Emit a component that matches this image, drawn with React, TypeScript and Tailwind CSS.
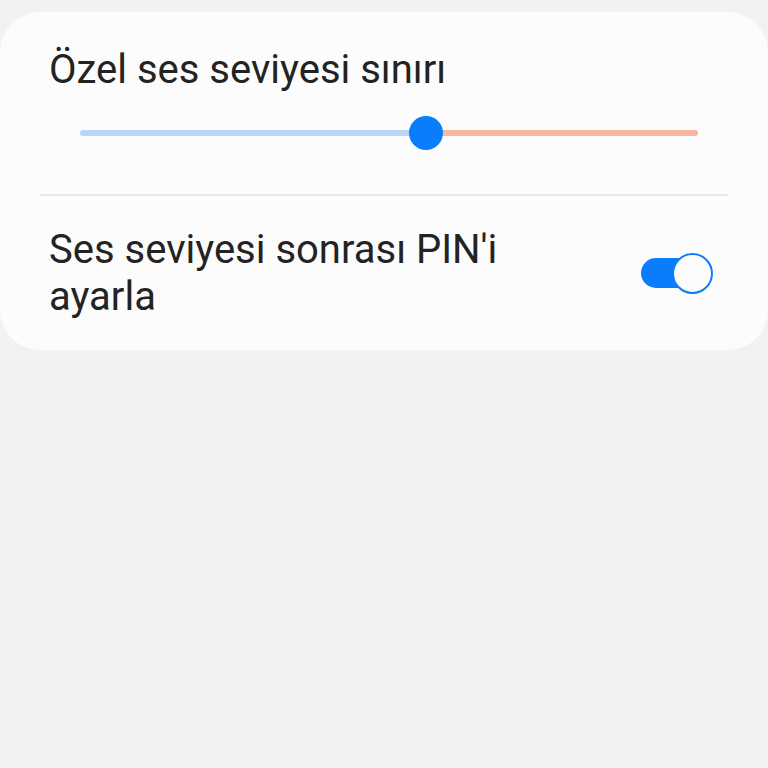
import React, { useState } from 'react';

const App = () => {
  const [value] = useState(56);
  const [pinOn, setPinOn] = useState(true);

  return (
    <div className="w-[768px] h-[768px] bg-[#f2f2f2] pt-[12px] font-['Roboto',sans-serif] text-[#232323]">
      <div className="bg-[#fcfcfc] rounded-[40px]">
        {/* slider section */}
        <div className="h-[182px] flex flex-col">
          <div className="pl-[49px] pt-[35px] text-[40px] leading-[46px]">Özel ses seviyesi sınırı</div>
          <div className="mt-[23px] ml-[80px] mr-[70px] relative h-[34px] flex items-center">
            <div className="flex w-full h-[6px] rounded-full overflow-hidden">
              <div className="h-full bg-[#b6d7f8]" style={{ width: `${value}%` }} />
              <div className="h-full flex-1 bg-[#f8b6a2]" />
            </div>
            <div
              className="absolute w-[34px] h-[34px] rounded-full bg-[#0a7dfc] top-0"
              style={{ left: `calc(${value}% - 17px)` }}
            />
          </div>
        </div>
        <div className="mx-[40px] h-[2px] bg-[#e8e8e8]" />
        {/* PIN toggle */}
        <div className="flex items-center justify-between pl-[49px] pr-[55px] pt-[30px] pb-[30px]">
          <div className="w-[520px] text-[40px] leading-[47px]">Ses seviyesi sonrası PIN'i ayarla</div>
          <button
            onClick={() => setPinOn(!pinOn)}
            className="relative w-[72px] h-[41px] flex items-center"
          >
            <span className={`absolute left-0 w-[60px] h-[30px] rounded-full ${pinOn ? 'bg-[#0a7dfc]' : 'bg-[#c8c8c8]'}`} />
            <span
              className={`absolute w-[41px] h-[41px] rounded-full bg-[#fcfcfc] border-[2.5px] ${pinOn ? 'right-0 border-[#0a7dfc]' : 'left-0 border-[#c8c8c8]'}`}
            />
          </button>
        </div>
      </div>
    </div>
  );
};

export default App;
